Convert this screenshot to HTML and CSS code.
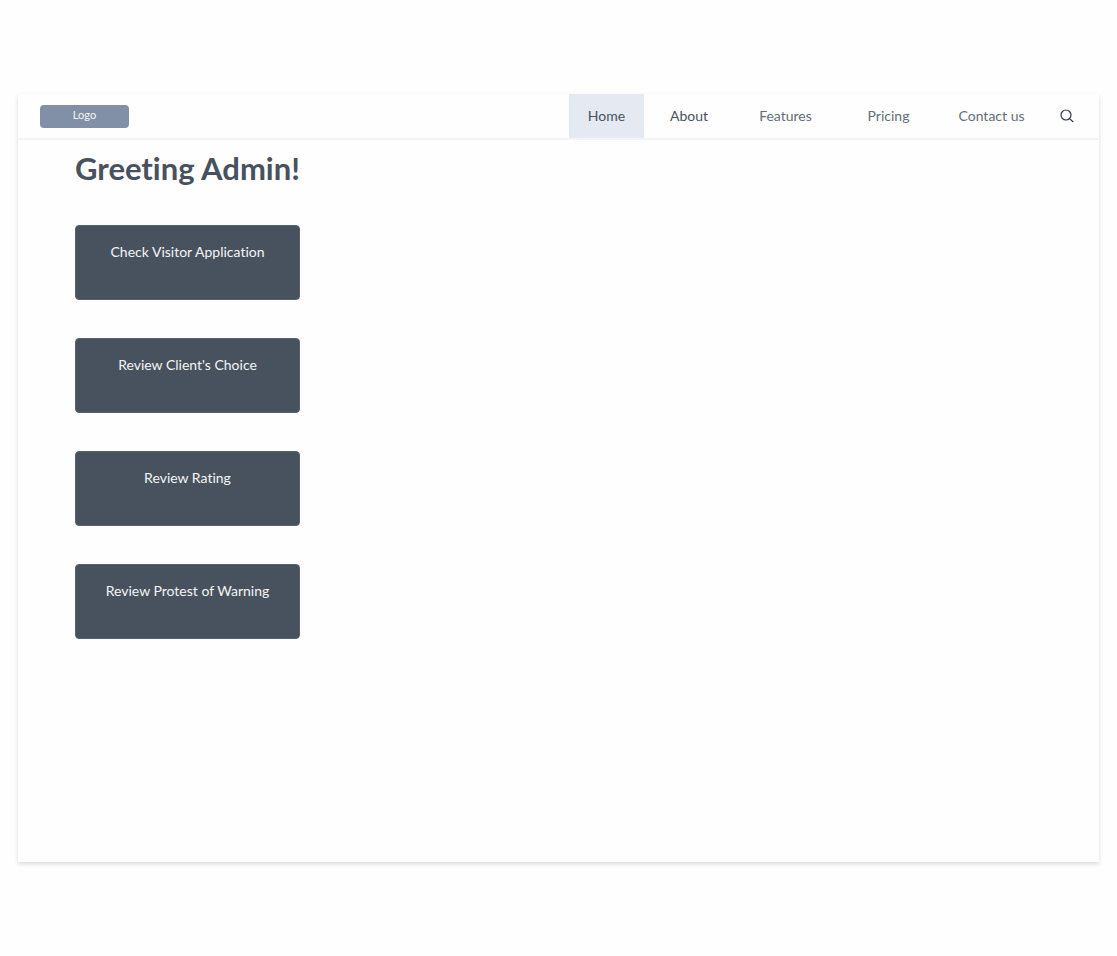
FILE: index.html
```html
<!DOCTYPE html>
<html lang="en">
<head>
<meta charset="utf-8">
<meta name="viewport" content="width=device-width, initial-scale=1">
<title>Admin</title>
<link rel="stylesheet" href="styles.css">
</head>
<body>
<div class="panel">
  <header class="topbar">
    <a class="logo" href="#">Logo</a>
    <nav class="nav">
      <a class="nav-link nav-home" href="#" aria-current="page">Home</a>
      <a class="nav-link nav-about" href="#">About</a>
      <a class="nav-link nav-muted" href="#">Features</a>
      <a class="nav-link nav-muted" href="#">Pricing</a>
      <a class="nav-link nav-muted" href="#">Contact us</a>
    </nav>
    <button class="search" type="button" aria-label="Search">
      <svg width="14" height="14" viewBox="0 0 14 14" fill="none" stroke="currentColor" stroke-width="1.2" stroke-linecap="round"><circle cx="6" cy="6" r="5"/><path d="M9.8 9.9 13 12.7"/></svg>
    </button>
  </header>
  <main class="content">
    <h1 class="title">Greeting Admin!</h1>
    <div class="actions">
      <button class="action" type="button">Check Visitor Application</button>
      <button class="action" type="button">Review Client's Choice</button>
      <button class="action" type="button">Review Rating</button>
      <button class="action" type="button">Review Protest of Warning</button>
    </div>
  </main>
</div>
</body>
</html>
```
FILE: styles.css
```css
* {
  box-sizing: border-box;
}

body {
  margin: 0;
  min-height: 100vh;
  padding: 94px 18px;
  display: flex;
  background: #fefefe;
  color: #48525e;
  font: 14px/20px Lato, sans-serif;
  font-variant-ligatures: none;
}

.panel {
  flex: 1;
  background: #fefefe;
  box-shadow: 0 2px 4px rgba(72, 82, 94, 0.2);
}

.topbar {
  display: flex;
  align-items: center;
  height: 46px;
  padding: 0 8px 0 22px;
  border-bottom: 2px solid #f2f4f9;
}

.logo {
  width: 89px;
  height: 23px;
  margin-right: auto;
  border-radius: 4px;
  background: #8290a7;
  color: #f4f5f8;
  font-size: 11px;
  line-height: 20px;
  text-align: center;
  text-decoration: none;
}

.nav {
  display: flex;
  align-self: stretch;
}

.nav-link {
  display: flex;
  align-items: center;
  justify-content: center;
  width: 103px;
  color: #48525e;
  text-decoration: none;
}

.nav-home {
  width: 75px;
  background: #e4e9f2;
}

.nav-about {
  width: 90px;
}

.nav-muted {
  color: #636d79;
}

.search {
  display: flex;
  align-items: center;
  justify-content: center;
  width: 48px;
  height: 44px;
  padding: 0;
  border: 0;
  background: none;
  color: #2f3946;
}

.content {
  padding: 8px 57px;
}

.title {
  margin: 0 0 37px;
  font-size: 31px;
  line-height: 40px;
  font-weight: 700;
}

.actions {
  display: grid;
  grid-template-columns: 225px;
  row-gap: 38px;
}

.action {
  display: flex;
  justify-content: center;
  height: 75px;
  padding: 16px 0 0;
  border: 1px solid #566271;
  border-radius: 4px;
  background: #48525e;
  color: #f4f5f6;
  font: inherit;
  font-variant-ligatures: none;
}
```
